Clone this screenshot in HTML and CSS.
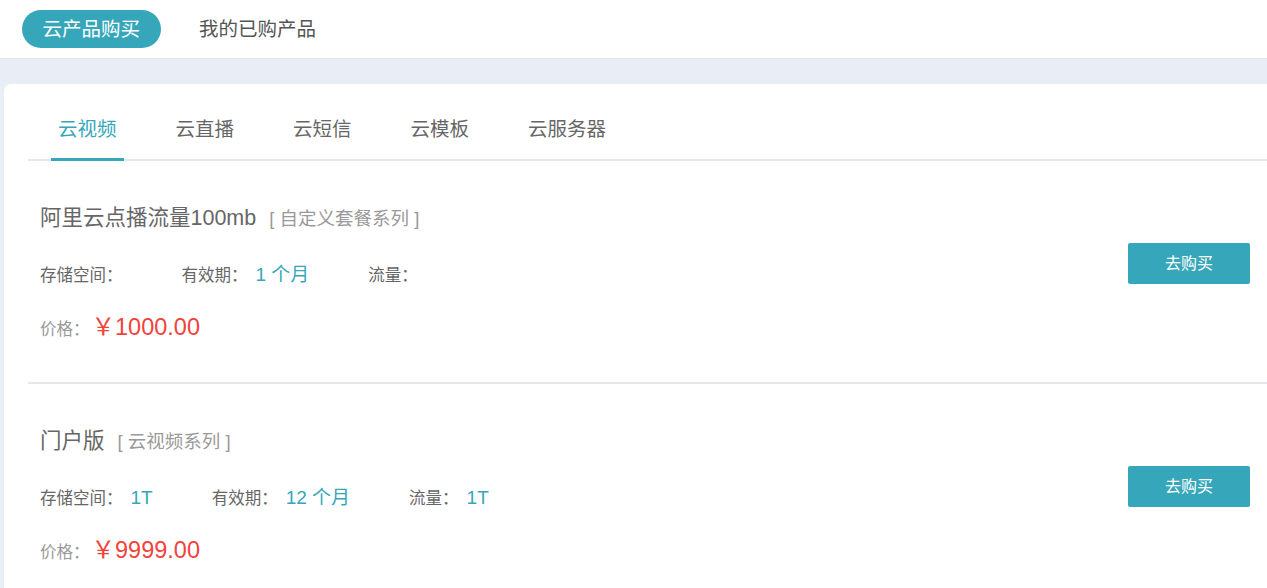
FILE: index.html
```html
<!DOCTYPE html>
<html lang="zh-CN">
<head>
	<meta charset="UTF-8">
	<title>云产品购买</title>
	<link rel="stylesheet" href="styles.css">
</head>
<body>
    <div class="topNav">
        <span class="topTab active">云产品购买</span>
        <span class="topTab">我的已购产品</span>
    </div>
    <div class="main">
        <div class="card">
            <ul class="tabs">
                <li class="active">云视频</li>
                <li>云直播</li>
                <li>云短信</li>
                <li>云模板</li>
                <li>云服务器</li>
            </ul>
            <div class="product">
                <div class="info">
                    <div class="title">阿里云点播流量100mb<span class="series">[ 自定义套餐系列 ]</span></div>
                    <div class="attrs">
                        <span class="attr">存储空间：<em></em></span>
                        <span class="attr">有效期：<em>1 个月</em></span>
                        <span class="attr">流量：<em></em></span>
                    </div>
                    <div class="price">价格：<em>￥1000.00</em></div>
                </div>
                <div class="buyBtn">去购买</div>
            </div>
            <div class="product">
                <div class="info">
                    <div class="title">门户版<span class="series">[ 云视频系列 ]</span></div>
                    <div class="attrs">
                        <span class="attr">存储空间：<em>1T</em></span>
                        <span class="attr">有效期：<em>12 个月</em></span>
                        <span class="attr">流量：<em>1T</em></span>
                    </div>
                    <div class="price">价格：<em>￥9999.00</em></div>
                </div>
                <div class="buyBtn">去购买</div>
            </div>
        </div>
    </div>
</body>
</html>
```

FILE: styles.css
```css
* {
	padding: 0px;
	margin: 0px;
	list-style: none;
	box-sizing: border-box;
}
body {
	font-family: "Liberation Sans", "Noto Sans CJK SC", sans-serif;
	color: #666;
	background: #fff;
	overflow: hidden;
}
em {
	font-style: normal;
}
.topNav {
	display: flex;
	align-items: center;
	gap: 18px;
	height: 58px;
	padding-left: 22px;
	background: #fff;
}
.topTab {
	height: 38px;
	line-height: 38px;
	padding: 0 20.5px;
	font-size: 19.5px;
	color: #555;
	border-radius: 19px;
}
.topTab.active {
	background: #36a7ba;
	color: #fff;
}
.main {
	background: #e9eef6;
	border-top: 1px solid #e3e5e6;
	padding: 25px 0 0 4px;
}
.card {
	background: #fff;
	border-radius: 7px 0 0 0;
	padding-left: 24px;
	height: 520px;
}
.tabs {
	display: flex;
	gap: 45px;
	padding-left: 23px;
	border-bottom: 2px solid #e3e8ec;
}
.tabs li {
	padding: 26px 7px 10px;
	line-height: 38px;
	font-size: 19.5px;
	color: #666;
	border-bottom: 3px solid transparent;
	margin-bottom: -2px;
	cursor: pointer;
}
.tabs li.active {
	color: #36a7ba;
	border-bottom-color: #36a7ba;
}
.product {
	display: flex;
	justify-content: space-between;
	align-items: flex-start;
	padding: 42px 17px 38px 12px;
	border-bottom: 2px solid #e3e8ec;
}
.title {
	font-size: 21.5px;
	line-height: 30px;
	color: #666;
}
.series {
	margin-left: 13px;
	font-size: 18.5px;
	color: #999;
}
/* 冒号居中显示 */
.attrs,
.price {
	font-family: "Liberation Sans", "Noto Sans CJK TC", sans-serif;
}
.attrs {
	display: flex;
	gap: 59px;
	margin-top: 26px;
	line-height: 30px;
}
.attr {
	font-size: 16.5px;
	color: #666;
}
.attr em {
	margin-left: 8px;
	font-size: 19px;
	color: #36a7ba;
}
.attr em:empty {
	margin-left: 0;
}
.price {
	margin-top: 22px;
	line-height: 30px;
	font-size: 16.5px;
	color: #999;
}
.price em {
	margin-left: 2px;
	font-size: 23.5px;
	color: #f0433c;
}
.buyBtn {
	margin-top: 40px;
	width: 122px;
	height: 41px;
	line-height: 41px;
	text-align: center;
	font-size: 16px;
	color: #fff;
	background: #36a7ba;
	border-radius: 2px;
	cursor: pointer;
}
```
